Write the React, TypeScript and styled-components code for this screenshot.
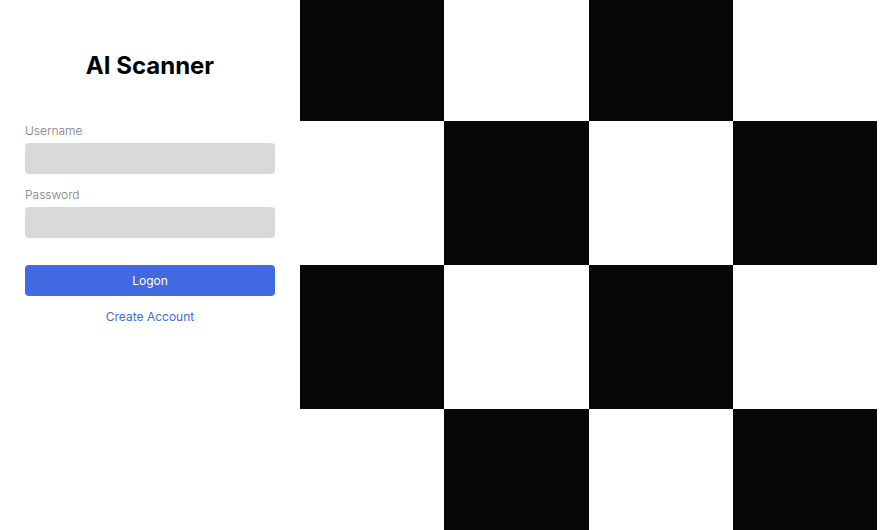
import React from "react";
import styled, { createGlobalStyle } from "styled-components";

const Global = createGlobalStyle`
  html, body { margin: 0; padding: 0; background: #fff; }
  body { font-family: Inter, "Noto Sans", sans-serif; }
  * { box-sizing: border-box; }
`;

const Page = styled.div`
  display: flex;
  width: 882px;
  height: 530px;
  overflow: hidden;
`;

const LoginPanel = styled.div`
  width: 300px;
  flex: none;
  padding: 51px 25px 0;
  display: flex;
  flex-direction: column;
`;

const Title = styled.h1`
  margin: 0 0 44px;
  font-size: 24px;
  font-weight: 700;
  line-height: 29px;
  text-align: center;
  color: #000;
`;

const Label = styled.label`
  display: block;
  font-size: 12px;
  font-weight: 300;
  line-height: 14.5px;
  color: #7c7c7c;
  margin-bottom: 4.5px;
`;

const Input = styled.input<{ $mb: number }>`
  display: block;
  width: 250px;
  height: 31px;
  border: none;
  border-radius: 4px;
  background: #d9d9d9;
  margin: 0 0 ${(p) => p.$mb}px;
  padding: 0 8px;
  font: inherit;
  outline: none;
`;

const Button = styled.button`
  width: 250px;
  height: 31px;
  border: none;
  border-radius: 4px;
  background: #4169e1;
  color: #fff;
  font-family: inherit;
  font-size: 12px;
  font-weight: 400;
  cursor: pointer;
  margin: 0 0 13.5px;
`;

const LinkText = styled.a`
  display: block;
  text-align: center;
  font-size: 12px;
  line-height: 14.5px;
  color: #4169e1;
  text-decoration: none;
`;

const ArtPanel = styled.div`
  width: 577px;
  height: 530px;
  flex: none;
  overflow: hidden;
  display: flex;
  align-items: center;
`;

const Board = styled.div`
  width: 577px;
  height: 577px;
  flex: none;
  display: grid;
  grid-template-columns: repeat(4, 1fr);
  grid-template-rows: repeat(4, 1fr);
`;

const Cell = styled.div<{ $dark: boolean }>`
  background: ${(p) => (p.$dark ? "#060606" : "#fff")};
`;

export default function App() {
  const cells = Array.from({ length: 16 }, (_, i) => {
    const r = Math.floor(i / 4);
    const c = i % 4;
    return (r + c) % 2 === 0;
  });
  return (
    <>
      <Global />
      <Page>
        <LoginPanel>
          <Title>AI Scanner</Title>
          <Label>Username</Label>
          <Input $mb={14} />
          <Label>Password</Label>
          <Input type="password" $mb={27} />
          <Button>Logon</Button>
          <LinkText href="#">Create Account</LinkText>
        </LoginPanel>
        <ArtPanel>
          <Board>
            {cells.map((d, i) => (
              <Cell key={i} $dark={d} />
            ))}
          </Board>
        </ArtPanel>
      </Page>
    </>
  );
}
